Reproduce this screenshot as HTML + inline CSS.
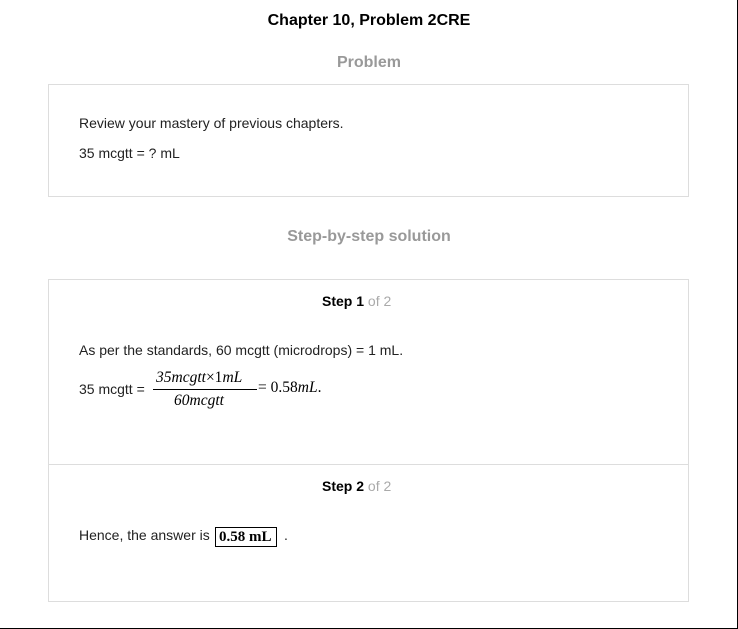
<!DOCTYPE html>
<html><head><meta charset="utf-8"><style>
body{margin:0;width:738px;height:629px;background:#fff;font-family:"Liberation Sans",sans-serif;position:relative;overflow:hidden}
.frame{position:absolute;left:0;top:0;width:737px;height:628px;border-right:1px solid #000;border-bottom:1px solid #000}
.t{position:absolute;left:0;width:738px;text-align:center}
.box{position:absolute;left:48px;width:639px;border:1px solid #ddd}
.p{position:absolute;font-size:14px;color:#222}
.serif{font-family:"Liberation Serif",serif}
</style></head><body>
<div class="frame"></div>
<div class="t" style="top:12px;font-size:16px;font-weight:bold;color:#000">Chapter 10, Problem 2CRE</div>
<div class="t" style="top:54px;font-size:16px;font-weight:bold;color:#999">Problem</div>
<div class="box" style="top:84px;height:111px"></div>
<div class="p" style="left:79px;top:115px">Review your mastery of previous chapters.</div>
<div class="p" style="left:79px;top:145px">35 mcgtt = ? mL</div>
<div class="t" style="top:228px;font-size:16px;font-weight:bold;color:#999">Step-by-step solution</div>
<div class="box" style="top:279px;height:321px"></div>
<div style="position:absolute;left:49px;top:464px;width:639px;border-top:1px solid #ddd"></div>
<div class="p" style="left:322px;top:293px;color:#000"><b>Step 1</b> <span style="color:#aaa">of 2</span></div>
<div class="p" style="left:79px;top:342px">As per the standards, 60 mcgtt (microdrops) = 1 mL.</div>
<div class="p" style="left:79px;top:381px">35 mcgtt =</div>
<div class="serif" style="position:absolute;left:156px;top:369px;font-size:15.5px"><i>35mcgtt</i>×1<i>mL</i></div>
<div style="position:absolute;left:153px;top:389px;width:104px;border-top:1px solid #000"></div>
<div class="serif" style="position:absolute;left:174px;top:392px;font-size:15.5px"><i>60mcgtt</i></div>
<div class="serif" style="position:absolute;left:258px;top:379px;font-size:15.5px">= 0.58<i>mL</i>.</div>
<div class="p" style="left:322px;top:478px;color:#000"><b>Step 2</b> <span style="color:#aaa">of 2</span></div>
<div class="p" style="left:79px;top:527px">Hence, the answer is</div>
<div class="serif" style="position:absolute;left:215px;top:527px;border:1px solid #000;padding:0 4px 0 3px;font-size:15px;font-weight:bold;line-height:18px">0.58 mL</div>
<div class="p" style="left:284px;top:527px">.</div>
</body></html>
